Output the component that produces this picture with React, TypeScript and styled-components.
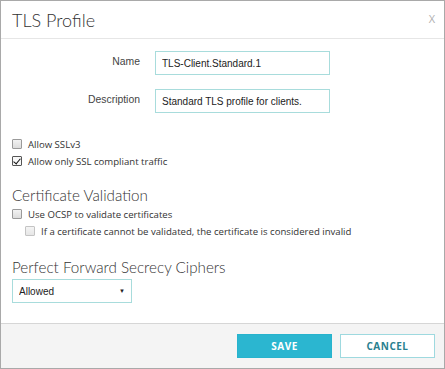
import React, { useState } from "react";
import styled, { createGlobalStyle } from "styled-components";

const GlobalStyle = createGlobalStyle`
  html, body {
    margin: 0;
    padding: 0;
    background: #ffffff;
  }
  * {
    box-sizing: border-box;
  }
`;

const App = () => {
  const [sslv3, setSslv3] = useState(false);
  const [compliant, setCompliant] = useState(true);
  const [ocsp, setOcsp] = useState(false);
  const [invalid, setInvalid] = useState(false);
  const [name, setName] = useState("TLS-Client.Standard.1");
  const [description, setDescription] = useState("Standard TLS profile for clients.");
  const [pfs, setPfs] = useState("Allowed");

  return (
    <>
      <GlobalStyle />
      <Dialog>
        <Header>
          <Title>TLS Profile</Title>
          <Close>X</Close>
        </Header>
        <Body>
          <FieldGrid>
            <Label>Name</Label>
            <TextInput value={name} onChange={(e) => setName(e.target.value)} />
            <Label>Description</Label>
            <TextInput value={description} onChange={(e) => setDescription(e.target.value)} />
          </FieldGrid>

          <CheckGroup>
            <CheckRow>
              <Checkbox type="checkbox" checked={sslv3} onChange={() => setSslv3(!sslv3)} />
              Allow SSLv3
            </CheckRow>
            <CheckRow>
              <Checkbox type="checkbox" checked={compliant} onChange={() => setCompliant(!compliant)} />
              Allow only SSL compliant traffic
            </CheckRow>
          </CheckGroup>

          <Section $top={18}>
            <SectionTitle>Certificate Validation</SectionTitle>
            <CheckRow>
              <Checkbox type="checkbox" checked={ocsp} onChange={() => setOcsp(!ocsp)} />
              Use OCSP to validate certificates
            </CheckRow>
            <CheckRow $indent>
              <Checkbox type="checkbox" checked={invalid} disabled={!ocsp} onChange={() => setInvalid(!invalid)} />
              If a certificate cannot be validated, the certificate is considered invalid
            </CheckRow>
          </Section>

          <Section $top={20}>
            <SectionTitle>Perfect Forward Secrecy Ciphers</SectionTitle>
            <SelectWrap>
              <Select value={pfs} onChange={(e) => setPfs(e.target.value)}>
                <option>Allowed</option>
                <option>Required</option>
                <option>Disabled</option>
              </Select>
              <Caret>▼</Caret>
            </SelectWrap>
          </Section>
        </Body>
        <Footer>
          <Button $primary>SAVE</Button>
          <Button>CANCEL</Button>
        </Footer>
      </Dialog>
    </>
  );
};

export default App;

const Dialog = styled.div`
  width: 445px;
  height: 369px;
  border: 1px solid #a9a9a9;
  display: flex;
  flex-direction: column;
  background: #fff;
`;

const Header = styled.div`
  height: 38px;
  flex-shrink: 0;
  display: flex;
  align-items: center;
  justify-content: space-between;
  padding: 0 9px 0 11px;
  border-bottom: 1px solid #e6e6e6;
`;

const Title = styled.h1`
  margin: 0;
  font-family: "Lato", sans-serif;
  font-weight: 300;
  font-size: 18px;
  color: #333;
`;

const Close = styled.span`
  font-family: "Open Sans", sans-serif;
  font-size: 11px;
  color: #b0b0b0;
  margin-top: -3px;
`;

const Body = styled.div`
  flex: 1;
  padding: 12px 11px 0;
  font-family: "Open Sans", sans-serif;
  font-size: 9.6px;
  color: #333;
`;

const FieldGrid = styled.div`
  display: grid;
  grid-template-columns: 128px 175px;
  column-gap: 15px;
  row-gap: 14px;
  align-items: center;
`;

const Label = styled.label`
  text-align: right;
  font-family: "Liberation Sans", sans-serif;
  font-size: 10.4px;
  color: #444;
  margin-top: -4px;
`;

const TextInput = styled.input`
  height: 24px;
  border: 1px solid #a8dcdc;
  padding: 0 6px;
  font-family: "Liberation Sans", sans-serif;
  font-size: 10px;
  color: #222;
  outline: none;
`;

const CheckGroup = styled.div`
  margin-top: 24px;
  display: flex;
  flex-direction: column;
  gap: 3px;
`;

const CheckRow = styled.label<{ $indent?: boolean }>`
  display: flex;
  align-items: center;
  gap: 6px;
  padding-left: ${(p) => (p.$indent ? "13px" : "0")};
  height: 14px;
`;

const Checkbox = styled.input`
  appearance: none;
  margin: 0;
  width: 10px;
  height: 10px;
  flex-shrink: 0;
  border: 1px solid #9a9a9a;
  border-radius: 1px;
  background: linear-gradient(#f2f2f2, #dcdcdc);
  position: relative;

  &:checked {
    background: #f8f8f8;
    border-color: #555;
  }

  &:checked::after {
    content: "";
    position: absolute;
    left: 2px;
    top: 0px;
    width: 3px;
    height: 6px;
    border: solid #111;
    border-width: 0 1.6px 1.6px 0;
    transform: rotate(40deg);
  }

  &:disabled {
    border-color: #c4c4c4;
    background: linear-gradient(#f4f4f4, #e6e6e6);
  }
`;

const Section = styled.div<{ $top: number }>`
  margin-top: ${(p) => p.$top}px;
  display: flex;
  flex-direction: column;
  gap: 3px;
`;

const SectionTitle = styled.h2`
  margin: 0;
  font-family: "Lato", sans-serif;
  font-weight: 300;
  font-size: 15.2px;
  color: #333;
`;

const SelectWrap = styled.div`
  position: relative;
  width: 120px;
`;

const Select = styled.select`
  appearance: none;
  width: 100%;
  height: 24px;
  border: 1px solid #a8dcdc;
  background: #fff;
  padding: 0 6px;
  font-family: "Liberation Sans", sans-serif;
  font-size: 10px;
  color: #222;
  outline: none;
`;

const Caret = styled.span`
  position: absolute;
  right: 7px;
  top: 8px;
  font-size: 6px;
  color: #222;
  pointer-events: none;
`;

const Footer = styled.div`
  height: 45px;
  flex-shrink: 0;
  border-top: 1px solid #d6d6d6;
  background: #f4f4f4;
  display: flex;
  align-items: center;
  justify-content: flex-end;
  gap: 8px;
  padding: 0 9px 0 0;
`;

const Button = styled.button<{ $primary?: boolean }>`
  width: 95px;
  height: 24px;
  border: 1px solid ${(p) => (p.$primary ? "#27b3cd" : "#9ed9df")};
  background: ${(p) => (p.$primary ? "#2bb6d0" : "#fff")};
  color: ${(p) => (p.$primary ? "#fff" : "#2a7f8f")};
  font-family: "Open Sans", sans-serif;
  font-weight: 700;
  font-size: 10px;
  letter-spacing: 0.5px;
  cursor: pointer;
`;
